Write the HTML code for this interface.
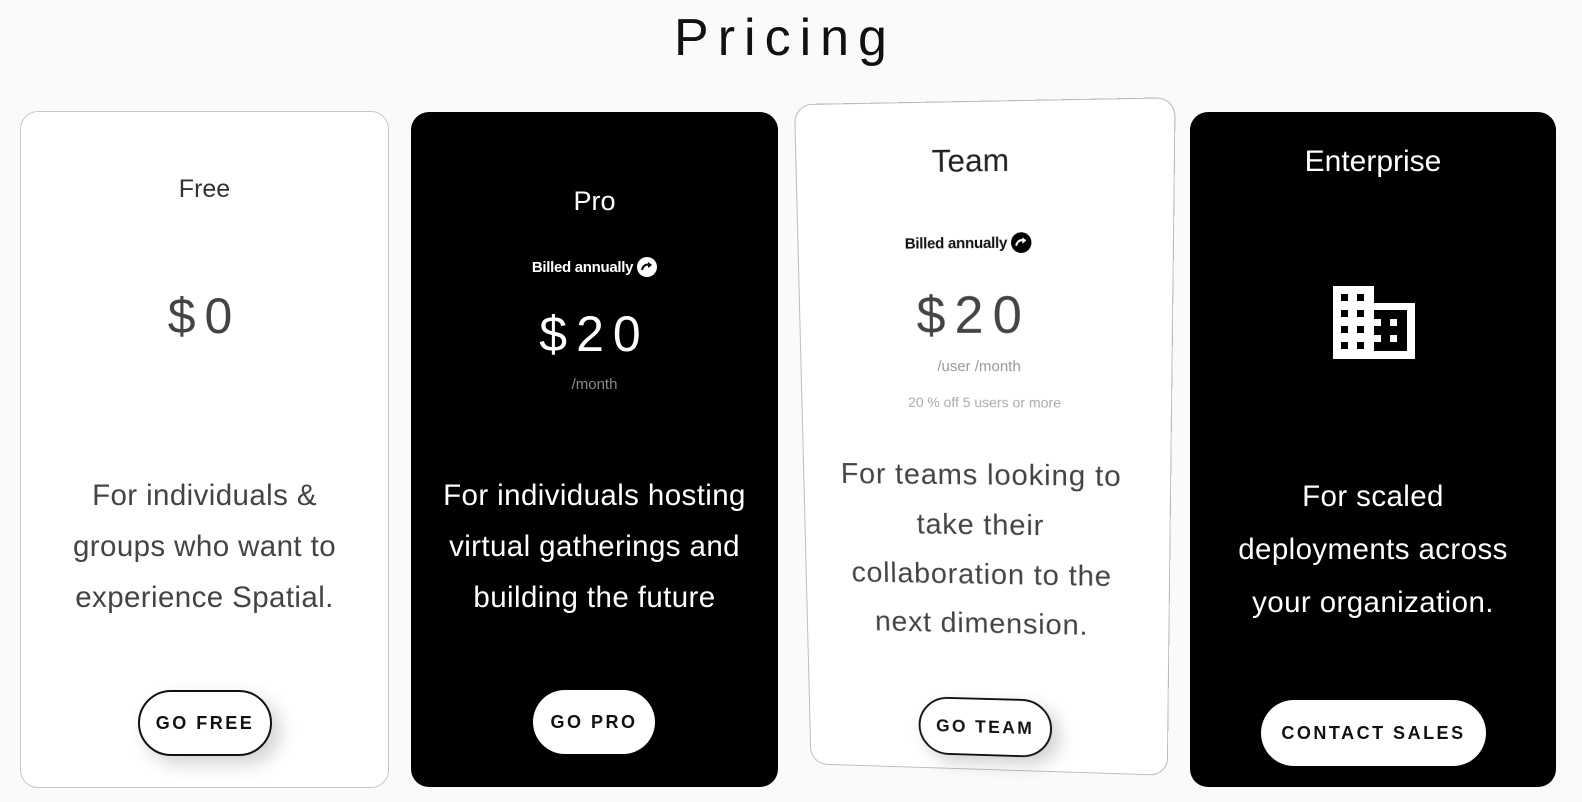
<!DOCTYPE html>
<html><head><meta charset="utf-8"><style>
*{box-sizing:border-box;margin:0;padding:0}
body{width:1582px;height:802px;background:#fafafa;font-family:"Liberation Sans",sans-serif;position:relative;overflow:hidden}
.title{position:absolute;left:0;width:1570px;top:8px;text-align:center;font-size:52px;letter-spacing:9px;color:#111;font-weight:300}
.card{position:absolute;border-radius:18px;text-align:center}
.w{background:#fff;border:1px solid #c8c8c8;color:#333}
.b{background:#000;color:#fff}
.abs{position:absolute;left:0;right:0;text-align:center}
.name{font-size:27px}
.bill{font-size:15px;font-weight:bold;letter-spacing:-.3px}
.ic{display:inline-block;width:20px;height:20px;border-radius:50%;vertical-align:-5px;margin-left:4px;position:relative}
.price{font-size:50px;letter-spacing:9px;font-weight:300}
.sub{font-size:15px;color:#888}
.desc{font-size:29.5px;line-height:51px;letter-spacing:.4px;white-space:nowrap}
.btn{position:absolute;border-radius:34px;font-weight:bold;font-size:18px;letter-spacing:2.5px;display:flex;align-items:center;justify-content:center}
</style></head><body>
<div class="title">Pricing</div>

<div class="card w" style="left:20px;top:111px;width:369px;height:677px">
 <div class="abs name" style="top:63px;font-size:25px">Free</div>
 <div class="abs price" style="top:175px;color:#444">$0</div>
 <div class="abs desc" style="top:358px;color:#444">For individuals &amp;<br>groups who want to<br>experience Spatial.</div>
 <div class="btn" style="left:117px;top:578px;width:134px;height:66px;border:2px solid #111;background:#fff;color:#111;box-shadow:8px 8px 18px rgba(0,0,0,.18)">GO FREE</div>
</div>

<div class="card b" style="left:411px;top:112px;width:367px;height:675px">
 <div class="abs name" style="top:74px">Pro</div>
 <div class="abs bill" style="top:145px">Billed annually<span class="ic" style="background:#fff"><svg width="20" height="20"><path d="M5 13 Q7 6 14 8" stroke="#000" stroke-width="2" fill="none"/><path d="M11 5 L15 8 L11 11" fill="#000"/></svg></span></div>
 <div class="abs price" style="top:193px">$20</div>
 <div class="abs sub" style="top:264px">/month</div>
 <div class="abs desc" style="top:358px">For individuals hosting<br>virtual gatherings and<br>building the future</div>
 <div class="btn" style="left:122px;top:578px;width:122px;height:64px;background:#fff;color:#111">GO PRO</div>
</div>

<div class="card w" style="left:799px;top:109px;width:371px;height:675px;transform:perspective(1400px) rotateX(-8deg) rotateY(-6deg) rotateZ(-0.4deg);border-color:#bbb">
 <div class="abs name" style="top:38px;left:-24px;font-size:31px;color:#222">Team</div>
 <div class="abs bill" style="top:125px;left:-30px;color:#111">Billed annually<span class="ic" style="background:#000"><svg width="20" height="20"><path d="M5 13 Q7 6 14 8" stroke="#fff" stroke-width="2" fill="none"/><path d="M11 5 L15 8 L11 11" fill="#fff"/></svg></span></div>
 <div class="abs price" style="top:176px;left:-20px;color:#444;font-size:52px">$20</div>
 <div class="abs sub" style="top:248px;left:-10px;color:#999">/user /month</div>
 <div class="abs sub" style="top:284px;color:#aaa;font-size:14px;left:0">20 % off 5 users or more</div>
 <div class="abs desc" style="top:340px;left:-10px;color:#444;letter-spacing:.8px">For teams looking to<br>take their<br>collaboration to the<br>next dimension.</div>
 <div class="btn" style="left:114px;top:597px;width:138px;height:62px;border:2px solid #111;background:#fff;color:#111;box-shadow:8px 8px 18px rgba(0,0,0,.18)">GO TEAM</div>
</div>

<div class="card b" style="left:1190px;top:112px;width:366px;height:675px">
 <div class="abs name" style="top:33px;font-size:30px">Enterprise</div>
 <svg style="position:absolute;left:143px;top:174px" width="82" height="73" viewBox="0 0 82 73">
  <path fill="#fff" fill-rule="evenodd" d="M0 0H41V17H82V73H0Z M8 8h7v7h-7z M24 8h7v7h-7z M8 24h7v7h-7z M24 24h7v7h-7z M8 40h7v7h-7z M24 40h7v7h-7z M8 56h7v7h-7z M24 56h7v7h-7z M41 24H74V65H41V56h7v-7h-7V40h7v-7h-7z M57 33h7v7h-7z M57 49h7v7h-7z"/>
 </svg>
 <div class="abs desc" style="top:358px;line-height:53px">For scaled<br>deployments across<br>your organization.</div>
 <div class="btn" style="left:71px;top:588px;width:225px;height:66px;background:#fff;color:#111">CONTACT SALES</div>
</div>
</body></html>
